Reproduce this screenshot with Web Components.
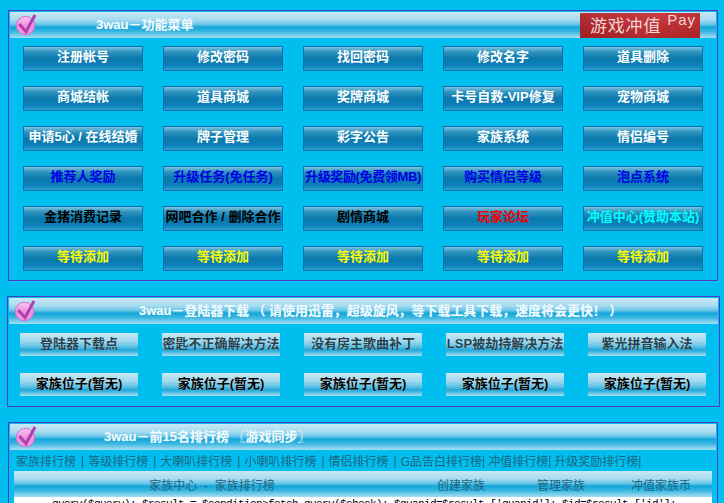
<!DOCTYPE html>
<html lang="zh">
<head>
<meta charset="utf-8">
<title>3wau</title>
<style>
  html, body { margin: 0; height: 503px; overflow: hidden; background: #00bfef; }
  body { font-family: "Liberation Sans", "Noto Sans CJK SC", sans-serif; }
  game-panel.first { margin: 10px 6px 0 8px; }
  game-panel.second { margin: 15px 4px 0 7px; }
  game-panel.third { margin: 15px 6px 0 8px; }
  .tight { letter-spacing: -.35px; }
  .red { color: #f00000; }
  .blue { color: #0000e6; }
  .black { color: #000; }
  .cyan { color: #00ffff; }
  .yellow { color: #ffff00; }
</style>
</head>
<body>
<game-panel class="first" indent="59" pay>
  <span slot="title">3wau－功能菜单</span>
  <button-grid>
    <dark-button>注册帐号</dark-button><dark-button>修改密码</dark-button><dark-button>找回密码</dark-button><dark-button>修改名字</dark-button><dark-button>道具删除</dark-button>
    <dark-button>商城结帐</dark-button><dark-button>道具商城</dark-button><dark-button>奖牌商城</dark-button><dark-button>卡号自救-VIP修复</dark-button><dark-button>宠物商城</dark-button>
    <dark-button>申请5心 / 在线结婚</dark-button><dark-button>牌子管理</dark-button><dark-button>彩字公告</dark-button><dark-button>家族系统</dark-button><dark-button>情侣编号</dark-button>
    <dark-button class="blue">推荐人奖励</dark-button><dark-button class="blue">升级任务(免任务)</dark-button><dark-button class="blue tight">升级奖励(免费领MB)</dark-button><dark-button class="blue">购买情侣等级</dark-button><dark-button class="blue">泡点系统</dark-button>
    <dark-button class="black">金猪消费记录</dark-button><dark-button class="black">网吧合作 / 删除合作</dark-button><dark-button class="black">剧情商城</dark-button><dark-button class="red">玩家论坛</dark-button><dark-button class="cyan">冲值中心(赞助本站)</dark-button>
    <dark-button class="yellow">等待添加</dark-button><dark-button class="yellow">等待添加</dark-button><dark-button class="yellow">等待添加</dark-button><dark-button class="yellow">等待添加</dark-button><dark-button class="yellow">等待添加</dark-button>
  </button-grid>
</game-panel>

<game-panel class="second" indent="103">
  <span slot="title" style="letter-spacing:-.05px">3wau－登陆器下载 （ 请使用迅雷，超级旋风，等下载工具下载，速度将会更快！ ）</span>
  <light-grid>
    <light-button>登陆器下载点</light-button><light-button>密匙不正确解决方法</light-button><light-button>没有房主歌曲补丁</light-button><light-button>LSP被劫持解决方法</light-button><light-button>紫光拼音输入法</light-button>
    <light-button class="black">家族位子(暂无)</light-button><light-button class="black">家族位子(暂无)</light-button><light-button class="black">家族位子(暂无)</light-button><light-button class="black">家族位子(暂无)</light-button><light-button class="black">家族位子(暂无)</light-button>
  </light-grid>
</game-panel>

<game-panel class="third" indent="67">
  <span slot="title">3wau－前15名排行榜 〖游戏同步〗</span>
  <rank-board></rank-board>
</game-panel>

<script>
const BAR_GRADIENT = "linear-gradient(#c8e9f5 0%, #a6dbf0 30%, #66c6e8 48%, #12a6da 58%, #35b5e0 74%, #a8dff1 100%)";

class GamePanel extends HTMLElement {
  constructor() {
    super();
    this.attachShadow({ mode: "open" });
  }

  connectedCallback() {
    const indent = this.getAttribute("indent") || 0;
    this.shadowRoot.innerHTML = /* html */`
    <style>
      :host { display: block; border: 1px solid #4a3fc4; padding: 1px; }
      .bar {
        height: 26px;
        display: flex;
        align-items: center;
        background: ${BAR_GRADIENT};
        color: #f2fbff;
        font-weight: bold;
        font-size: 13px;
      }
      .check { width: 22px; height: 22px; margin-left: 5px; flex: none; }
      .text { margin-left: ${indent}px; padding-bottom: 4px; white-space: nowrap; text-shadow: 0 0 1px #8fcfe8; }
      .pay {
        margin-left: auto;
        margin-right: 16px;
        width: 120px;
        height: 25px;
        background: linear-gradient(rgba(255,255,255,.06), rgba(0,0,0,.1)), linear-gradient(90deg, #b02226, #c63034 60%, #bb282c);
        color: #f3d6d6;
        font-size: 17px;
        display: flex;
        align-items: center;
        font-weight: normal;
        padding: 0 0 2px 10px;
        box-sizing: border-box;
        letter-spacing: .8px;
      }
      .pay small { font-size: 15px; margin: -9px 0 0 6px; letter-spacing: 1px; }
    </style>
    <div class="bar">
      <svg class="check" viewBox="0 0 22 22">
        <defs>
          <linearGradient id="ball" x1="0" y1="0" x2="0" y2="1">
            <stop offset="0" stop-color="#f6c6f0"/>
            <stop offset=".55" stop-color="#ec8fdd"/>
            <stop offset="1" stop-color="#f0a0e4"/>
          </linearGradient>
        </defs>
        <circle cx="10.5" cy="11.5" r="9.2" fill="url(#ball)" stroke="#d86ccf"/>
        <path d="M4.3 10l6.7 7.7L20 1" fill="none" stroke="#b040b0" stroke-width="3"/>
      </svg>
      <span class="text"><slot name="title"></slot></span>
      ${this.hasAttribute("pay") ? `<span class="pay">游戏冲值<small>Pay</small></span>` : ""}
    </div>
    <slot></slot>`;
  }
}

class ButtonGrid extends HTMLElement {
  constructor() {
    super();
    this.attachShadow({ mode: "open" });
    this.shadowRoot.innerHTML = /* html */`
    <style>
      :host {
        display: grid;
        grid-template-columns: repeat(5, 120px);
        grid-auto-rows: 25px;
        gap: 15px 20px;
        padding: 8px 0 8px 13px;
      }
    </style>
    <slot></slot>`;
  }
}

class LightGrid extends HTMLElement {
  constructor() {
    super();
    this.attachShadow({ mode: "open" });
    this.shadowRoot.innerHTML = /* html */`
    <style>
      :host {
        display: grid;
        grid-template-columns: repeat(5, 118px);
        grid-auto-rows: 23px;
        gap: 17px 24px;
        padding: 9px 0 9px 11px;
      }
    </style>
    <slot></slot>`;
  }
}

class DarkButton extends HTMLElement {
  constructor() {
    super();
    this.attachShadow({ mode: "open" });
    this.shadowRoot.innerHTML = /* html */`
    <style>
      :host {
        display: flex;
        align-items: center;
        justify-content: center;
        box-sizing: border-box;
        padding-bottom: 6px;
        border: 1px solid #0f6fae;
        background: linear-gradient(#7cc4de 0%, #2f93bf 22%, #0b79ac 50%, #0a7fb8 78%, #2aa0d0 100%);
        color: #fff;
        font: bold 13px "Liberation Sans", "Noto Sans CJK SC", sans-serif;
        white-space: nowrap;
      }
    </style>
    <slot></slot>`;
  }
}

class LightButton extends HTMLElement {
  constructor() {
    super();
    this.attachShadow({ mode: "open" });
    this.shadowRoot.innerHTML = /* html */`
    <style>
      :host {
        display: flex;
        align-items: center;
        justify-content: center;
        box-sizing: border-box;
        padding-bottom: 5px;
        background: linear-gradient(#c8e8f4 0%, #a3d9ee 35%, #5cc0e4 60%, #1ca7d8 74%, #a9dff1 100%);
        color: #24424f;
        font: bold 13px "Liberation Sans", "Noto Sans CJK SC", sans-serif;
        text-shadow: 0 0 1px rgba(255,255,255,.6);
        white-space: nowrap;
      }
    </style>
    <slot></slot>`;
  }
}

class RankBoard extends HTMLElement {
  constructor() {
    super();
    this.attachShadow({ mode: "open" });
    const links = [
      ["家族排行榜"], ["等级排行榜"], ["大喇叭排行榜"], ["小喇叭排行榜"], ["情侣排行榜"],
      ["G品告白排行榜", true], ["冲值排行榜", true], ["升级奖励排行榜", true]
    ].map(([name, tight]) => `<span>${name}</span><i class="${tight ? "tight" : ""}">|</i>`).join("");
    this.shadowRoot.innerHTML = /* html */`
    <style>
      :host { display: block; padding: 0 4px; color: #1c6480; font: 12px "Liberation Sans", "Noto Sans CJK SC", sans-serif; }
      .links { height: 21px; display: flex; align-items: center; padding-left: 2px; white-space: nowrap; }
      .links i { font-style: normal; margin: 0 4px 0 5px; }
      .links i.tight { margin: 0 3px 0 0; }
      .head {
        height: 26px;
        display: grid;
        grid-template-columns: 396px 102px 98px 102px;
        align-items: center;
        background: ${BAR_GRADIENT};
      }
      .head span { text-align: center; white-space: pre; }
      .code {
        background: #fff;
        color: #000;
        height: 40px;
        font: 11px/14px "Liberation Mono", monospace;
        letter-spacing: -.6px;
        white-space: pre;
        padding-left: 38px;
        overflow: hidden;
      }
    </style>
    <div class="links">${links}</div>
    <div class="head"><span>家族中心  -  家族排行榜</span><span>创建家族</span><span>管理家族</span><span>冲值家族币</span></div>
    <div class="code">query($query); $result = $condition&gt;fetch_query($check); $guanid=$result ['guanid']; $id=$result ['id'];</div>`;
  }
}

customElements.define("game-panel", GamePanel);
customElements.define("button-grid", ButtonGrid);
customElements.define("light-grid", LightGrid);
customElements.define("dark-button", DarkButton);
customElements.define("light-button", LightButton);
customElements.define("rank-board", RankBoard);
</script>
</body>
</html>
